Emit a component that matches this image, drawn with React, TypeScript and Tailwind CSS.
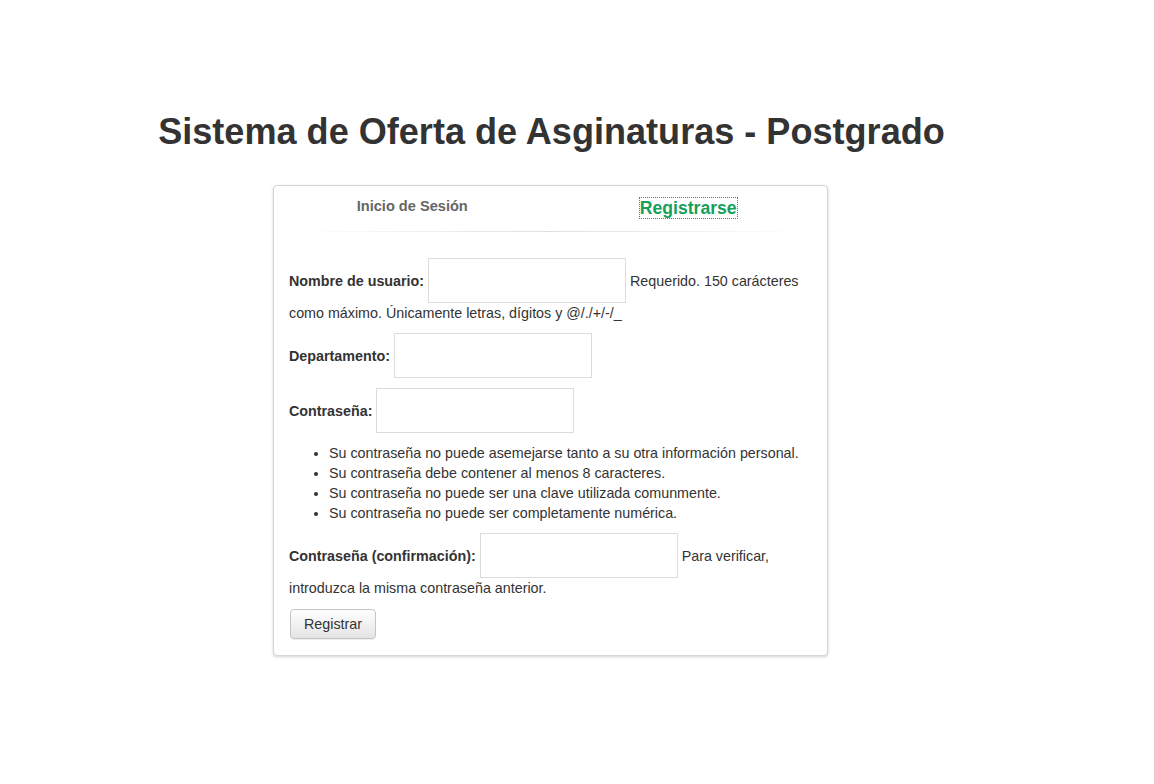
const font = { fontFamily: '"Liberation Sans", Arial, sans-serif' };

const passwordRules = [
  "Su contraseña no puede asemejarse tanto a su otra información personal.",
  "Su contraseña debe contener al menos 8 caracteres.",
  "Su contraseña no puede ser una clave utilizada comunmente.",
  "Su contraseña no puede ser completamente numérica.",
];

function Field() {
  return (
    <input
      type="text"
      className="inline-block align-baseline w-[198px] h-[45px] border border-[#dcdcdc] bg-white text-[14px] outline-none"
    />
  );
}

export default function App() {
  return (
    <div className="min-h-screen bg-white text-[#333]" style={font}>
      <div className="flex flex-col items-center pr-[53px] pt-[112px]">
        <h1 className="ml-[2px] text-[36.1px] leading-[39.6px] font-bold text-[#333] whitespace-nowrap">
          Sistema de Oferta de Asginaturas - Postgrado
        </h1>

        <div className="mt-[33px] w-[555px] rounded-[4px] border border-[#d6d6d6] bg-white shadow-[0_1px_3px_rgba(0,0,0,0.18)]">
          <div className="flex items-start h-[45px]">
            <div className="w-1/2 flex justify-center pt-[10px]">
              <span className="text-[14.6px] leading-[20px] font-bold text-[#666]">
                Inicio de Sesión
              </span>
            </div>
            <div className="w-1/2 flex items-start justify-center pt-[12px] pr-px">
              <span className="text-[17.6px] leading-[20px] font-bold text-[#16a05a] outline outline-1 outline-dotted outline-[#16a05a]">
                Registrarse
              </span>
            </div>
          </div>
          <div className="mx-[20px] h-px bg-gradient-to-r from-transparent via-[#e0e0e0] to-transparent" />

          <form className="px-[15px] pt-[26px] pb-4 text-[14.3px] leading-[20px]">
            <p className="mb-[10px]">
              <label className="font-bold">Nombre de usuario:</label> <Field />{" "}
              <span>Requerido. 150 carácteres como máximo. Únicamente letras, dígitos y @/./+/-/_</span>
            </p>
            <p className="mb-[10px]">
              <label className="font-bold">Departamento:</label> <Field />
            </p>
            <p className="mb-[10px]">
              <label className="font-bold">Contraseña:</label> <Field />
            </p>
            <ul className="list-disc pl-10 mb-[10px]">
              {passwordRules.map((rule) => (
                <li key={rule}>{rule}</li>
              ))}
            </ul>
            <p className="mb-[10px]">
              <label className="font-bold">Contraseña (confirmación):</label> <Field />{" "}
              <span>Para verificar, introduzca la misma contraseña anterior.</span>
            </p>
            <button
              type="button"
              className="ml-px mt-px w-[86px] h-[30px] rounded-[4px] border border-[#c4c4c4] bg-gradient-to-b from-white to-[#e4e4e4] text-[14.3px] text-[#333] shadow-[0_1px_1px_rgba(0,0,0,0.075)]"
            >
              Registrar
            </button>
          </form>
        </div>
      </div>
    </div>
  );
}
